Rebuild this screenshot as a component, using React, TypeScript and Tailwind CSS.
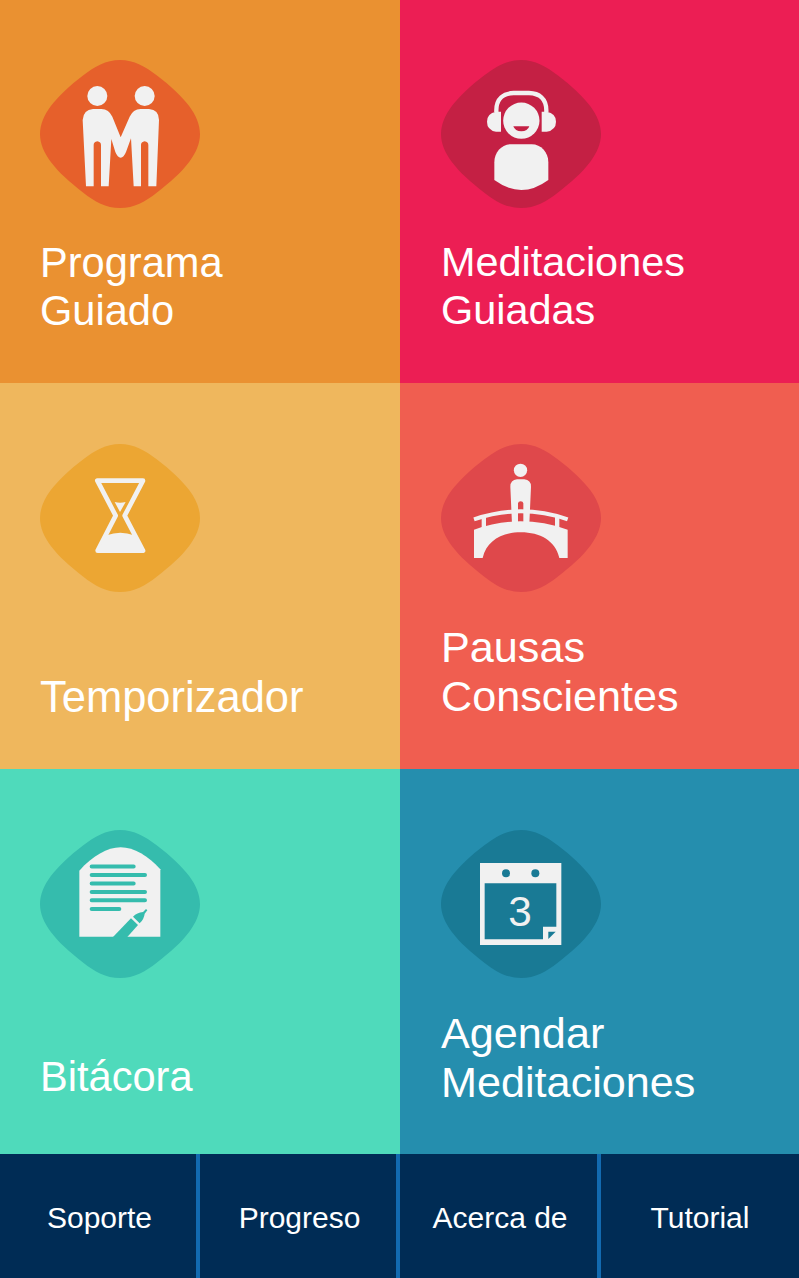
import type { ReactNode } from "react";

function Blob({ fill, children }: { fill: string; children: ReactNode }) {
  return (
    <svg viewBox="0 0 480 444" className="block h-[148px] w-40 flex-shrink-0" aria-hidden="true">
      <path
        d="M240 0C282 0 317 20 350 46C371 62 389 77 406 93C422 108 435 122 448 139C468 166 480 194 480 222S468 278 448 305C435 322 422 336 406 351C389 367 371 382 350 398C317 424 282 444 240 444S163 424 130 398C109 382 91 367 74 351C58 336 45 322 32 305C12 278 0 250 0 222S12 166 32 139C45 122 58 108 74 93C91 77 109 62 130 46C163 20 198 0 240 0Z"
        fill={fill}
      />
      {children}
    </svg>
  );
}

function PartnerIcon() {
  return (
    <Blob fill="#E6602B">
      <g fill="#F1F1F1">
        <circle cx="172" cy="108" r="30" />
        <circle cx="314" cy="108" r="30" />
        <path d="M159 147H184Q207 148 217 170L242 232L269 170Q279 148 302 147H327Q357 149 357 180L349 379H325V255Q325 246 314 244Q303 246 303 255V379H281L273 235L258 276Q251 293 242 293Q233 293 226 276L214 237L206 379H183V255Q183 246 172 244Q161 246 161 255V379H138L128 180Q130 149 159 147Z" />
      </g>
    </Blob>
  );
}

function HeadphonesIcon() {
  return (
    <Blob fill="#C42044">
      <path d="M166 157V151C166 115 188 100 218 99H264C294 100 316 115 316 151V157" fill="none" stroke="#F1F1F1" strokeWidth="13" />
      <g fill="#F1F1F1">
        <path d="M180 155H165Q138 160 138 185T165 215H180Z" />
        <path d="M302 155H317Q345 160 345 185T317 215H302Z" />
        <circle cx="241" cy="182" r="54.5" />
        <path d="M210 253H272C300 253 322 277 322 307V360Q281 390 241 390T160 360V307C160 277 182 253 210 253Z" />
      </g>
      <path d="M217 199H265Q260 214 241 214T217 199Z" fill="#C42044" />
    </Blob>
  );
}

function HourglassIcon() {
  return (
    <Blob fill="#ECA633">
      <path
        d="M172 110H309L254 215L309 320H173L227 215Z"
        fill="none"
        stroke="#F1F1F1"
        strokeWidth="14"
        strokeLinejoin="round"
      />
      <path d="M224 174Q240 178 257 174L240 204Z" fill="#F1F1F1" />
      <path d="M200 274Q241 258 282 274L309 322H173Z" fill="#F1F1F1" />
    </Blob>
  );
}

function BridgeIcon() {
  return (
    <Blob fill="#DF484B">
      <g fill="#F1F1F1">
        <circle cx="238.500" cy="79" r="20" />
        <path d="M228 106H250Q270 108 270 128L265 240H247V178Q246 172 239 172T231 178V240H213L208 128Q208 108 228 106Z" />
        <path d="M99 257Q238 207 380 257V342H355C343 290 297 265 240 265S137 290 125 342H99Z" />
        <path d="M122 218H135V255H122ZM342 218H355V255H342Z" />
      </g>
      <path d="M99 226Q240 178 380 226" fill="none" stroke="#F1F1F1" strokeWidth="12" />
    </Blob>
  );
}

function JournalIcon() {
  return (
    <Blob fill="#35BCAD">
      <path d="M118 122C158 78 202 52 242 52S325 78 361 118V320H118Z" fill="#F1F1F1" />
      <path
        d="M155 109.500H281M155 135H315M155 160.500H281M155 186H315M155 211H315M155 237H238"
        stroke="#35BCAD"
        strokeWidth="12"
        strokeLinecap="round"
      />
      <g fill="#35BCAD">
        <path d="M219 321L273 265L294 285L262 321Z" />
        <path d="M279 260Q291 248 309 246L318 237L322 241L314 251Q312 268 299 280Z" />
      </g>
    </Blob>
  );
}

function CalendarIcon() {
  return (
    <Blob fill="#197A95">
      <path d="M117 99H361V345H117ZM131 160V328H306V290H346V160Z" fill="#F1F1F1" fillRule="evenodd" />
      <circle cx="195" cy="130" r="12" fill="#197A95" />
      <circle cx="283" cy="130" r="12" fill="#197A95" />
      <path d="M322 305H344L322 327Z" fill="#197A95" />
      <text x="237" y="289" textAnchor="middle" fontSize="127" fill="#F1F1F1" fontFamily="Liberation Sans, Arial, sans-serif">
        3
      </text>
    </Blob>
  );
}

const TILES = [
  { lines: ["Programa", "Guiado"], icon: <PartnerIcon />, className: "bg-[#EA9131] pl-10 pt-[60px] pb-12 text-[41.6px] leading-[48px]" },
  { lines: ["Meditaciones", "Guiadas"], icon: <HeadphonesIcon />, className: "bg-[#EC1E54] pl-[41px] pt-[60px] pb-[49px] text-[41.4px] leading-[48px]" },
  { lines: ["Temporizador"], icon: <HourglassIcon />, className: "bg-[#EFB75D] pl-10 pt-[61px] pb-[47px] text-[43.5px] leading-[49px]" },
  { lines: ["Pausas", "Conscientes"], icon: <BridgeIcon />, className: "bg-[#F05E50] pl-[41px] pt-[61px] pb-12 text-[43.2px] leading-[49px]" },
  { lines: ["Bitácora"], icon: <JournalIcon />, className: "bg-[#4FDABB] pl-10 pt-[61px] pb-[53px] text-[41.6px] leading-[49px]" },
  { lines: ["Agendar", "Meditaciones"], icon: <CalendarIcon />, className: "bg-[#258EAE] pl-[41px] pt-[61px] pb-[47px] text-[43.2px] leading-[49px]" },
];

export default function App() {
  return (
    <div className="flex h-[1278px] w-[799px] flex-col overflow-hidden text-white [font-family:'Liberation_Sans',Arial,sans-serif]">
      <main className="grid grid-cols-[400px_399px] grid-rows-[383px_386px_385px]">
        {TILES.map((tile) => (
          <button key={tile.lines.join(" ")} className={`flex flex-col items-start justify-between text-left ${tile.className}`}>
            {tile.icon}
            <span>
              {tile.lines.map((line) => (
                <span key={line} className="block whitespace-nowrap">
                  {line}
                </span>
              ))}
            </span>
          </button>
        ))}
      </main>

      <nav className="grid flex-1 grid-cols-[200px_200px_201px_198px] bg-[#002C55] text-[30px] leading-9">
        <button className="border-r-4 border-[#126AB0] pt-1 pl-[3px]">Soporte</button>
        <button className="border-r-4 border-[#126AB0] pt-1 pl-[3px]">Progreso</button>
        <button className="border-r-4 border-[#126AB0] pt-1 pl-[3px]">Acerca de</button>
        <button className="pt-1">Tutorial</button>
      </nav>
    </div>
  );
}
